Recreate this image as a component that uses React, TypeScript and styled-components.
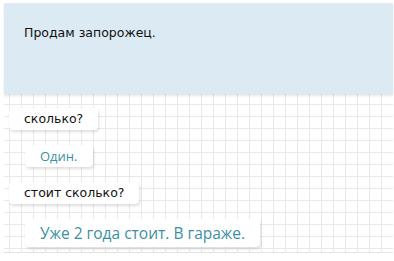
import React from 'react'
import styled, { createGlobalStyle } from 'styled-components'

const GlobalStyle = createGlobalStyle`
    html, body {
        margin: 0;
        padding: 0;
        background: #ffffff;
    }
    body {
        font-family: 'DejaVu Sans', sans-serif;
    }
`

const Page = styled.div`
    padding: 3px 1px 0 4px;
    width: 389px;
`

const Header = styled.div`
    height: 91px;
    box-sizing: border-box;
    padding: 21px 20px 0;
    background: #dbeaf3;
    border-top: 1px solid #e4eaee;
    box-shadow: 0 2px 2px rgba(0, 0, 0, 0.1);
    position: relative;
    z-index: 1;
    font-size: 12.5px;
    color: #111;
`

const Board = styled.div`
    height: 159px;
    box-sizing: border-box;
    padding: 14px 0 5px 5px;
    border-bottom: 1px solid #e2e2e2;
    background-color: #fff;
    background-image: linear-gradient(to right, #e9e9e9 1px, transparent 1px),
        linear-gradient(to bottom, #e9e9e9 1px, transparent 1px);
    background-size: 12px 12px;
    background-position: 5px 10px;
    display: flex;
    flex-direction: column;
    align-items: flex-start;
    gap: 15px;
`

const Bubble = styled.div<{ $reply?: boolean; $big?: boolean }>`
    margin-left: ${(p) => (p.$reply ? 16 : 0)}px;
    padding: 0 15px;
    height: ${(p) => (p.$big ? 28 : 22)}px;
    line-height: ${(p) => (p.$big ? 28 : 22)}px;
    background: #fff;
    border-radius: 4px;
    box-shadow: 1px 2px 3px rgba(0, 0, 0, 0.13);
    font-family: ${(p) => (p.$reply ? "'Open Sans', sans-serif" : "'DejaVu Sans', sans-serif")};
    font-size: ${(p) => (p.$big ? 15.5 : p.$reply ? 13 : 12.5)}px;
    color: ${(p) => (p.$reply ? '#3b90a6' : '#111')};
    white-space: nowrap;
`

export default function App() {
    return (
        <>
            <GlobalStyle />
            <Page>
                <Header>Продам запорожец.</Header>
                <Board>
                    <Bubble>сколько?</Bubble>
                    <Bubble $reply>Один.</Bubble>
                    <Bubble>стоит сколько?</Bubble>
                    <Bubble $reply $big>
                        Уже 2 года стоит. В гараже.
                    </Bubble>
                </Board>
            </Page>
        </>
    )
}
